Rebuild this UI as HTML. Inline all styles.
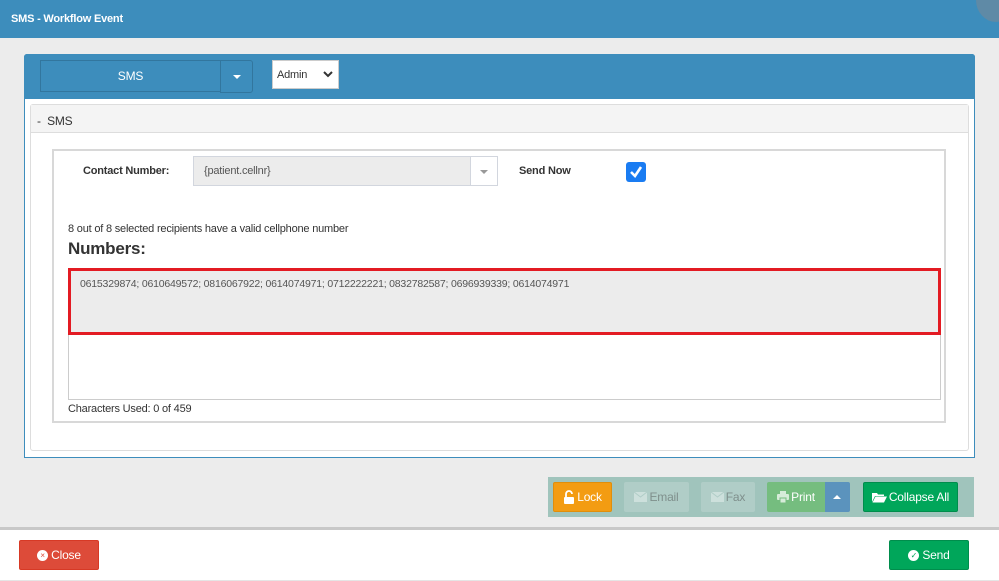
<!DOCTYPE html><html><head><style>
*{box-sizing:border-box;margin:0;padding:0}
body{width:999px;height:581px;position:relative;overflow:hidden;background:#ececec;font-family:"Liberation Sans",sans-serif;font-size:11px;color:#333;letter-spacing:-0.2px}
.a{position:absolute}
.btn{position:absolute;color:#fff;font-size:12px;display:flex;align-items:center;justify-content:center;border-radius:2px}
.btn svg{margin-right:2px}
</style></head><body>
<div class="a" style="left:0;top:0;width:999px;height:38px;background:#3d8dbc"></div>
<div class="a" style="left:976px;top:-22px;width:40px;height:44px;border-radius:50%;background:#5f8aa6"></div>
<div class="a" style="left:11px;top:13px;color:#fff;font-weight:bold;font-size:11px">SMS - Workflow Event</div>

<div class="a" style="left:24px;top:54px;width:951px;height:404px;border:1px solid #3d8dbc;background:#fff;border-radius:3px 3px 0 0"></div>
<div class="a" style="left:24px;top:54px;width:951px;height:45px;background:#3d8dbc;border-radius:3px 3px 0 0"></div>
<div class="a" style="left:40px;top:60px;width:181px;height:32px;border:1px solid #32769e;color:#fff;font-size:12px;display:flex;align-items:center;justify-content:center">SMS</div>
<div class="a" style="left:220px;top:60px;width:33px;height:33px;border:1px solid #32769e;border-radius:0 3px 3px 0"></div>
<div class="a" style="left:233px;top:75px;border-left:4px solid transparent;border-right:4px solid transparent;border-top:4px solid #fff"></div>
<div class="a" style="left:272px;top:60px;width:67px;height:29px;background:#fff;border:1px solid #ccc;padding:8px 4px;font-size:11px">Admin</div>
<svg class="a" style="left:323px;top:70px" width="10" height="8"><path d="M1 2 L5 6 L9 2" stroke="#333" stroke-width="2" fill="none"/></svg>

<div class="a" style="left:30px;top:104px;width:939px;height:347px;border:1px solid #ddd;border-radius:3px;background:#fff"></div>
<div class="a" style="left:31px;top:105px;width:937px;height:28px;background:#f4f4f4;border-bottom:1px solid #ddd"></div>
<div class="a" style="left:37px;top:114px;font-size:12px">-&nbsp; SMS</div>

<div class="a" style="left:52px;top:149px;width:894px;height:274px;border:2px solid #d8d8d8"></div>
<div class="a" style="left:83px;top:165px;font-weight:bold">Contact Number:</div>
<div class="a" style="left:193px;top:156px;width:305px;height:30px;border:1px solid #d2d6de;background:#ececec;padding:8px 10px;font-size:11px;color:#555">{patient.cellnr}</div>
<div class="a" style="left:470px;top:157px;width:27px;height:28px;background:#fff;border-left:1px solid #d2d6de"></div>
<div class="a" style="left:480px;top:170px;border-left:4px solid transparent;border-right:4px solid transparent;border-top:4px solid #999"></div>
<div class="a" style="left:519px;top:165px;font-weight:bold">Send Now</div>
<div class="a" style="left:626px;top:162px;width:20px;height:20px;background:#1a7cf2;border-radius:3px"></div>
<svg class="a" style="left:626px;top:162px" width="20" height="20"><path d="M5 10 L9 14 L15 5" stroke="#fff" stroke-width="2.6" fill="none"/></svg>

<div class="a" style="left:68px;top:223px">8 out of 8 selected recipients have a valid cellphone number</div>
<div class="a" style="left:68px;top:239px;font-weight:bold;font-size:17px">Numbers:</div>
<div class="a" style="left:68px;top:268px;width:873px;height:132px;border:1px solid #ccc;background:#fff"></div>
<div class="a" style="left:68px;top:268px;width:873px;height:67px;border:3px solid #e31b23;background:#ececec;padding:7px 9px;font-size:10.5px;color:#555">0615329874; 0610649572; 0816067922; 0614074971; 0712222221; 0832782587; 0696939339; 0614074971</div>
<div class="a" style="left:68px;top:403px">Characters Used: 0 of 459</div>

<div class="a" style="left:548px;top:477px;width:426px;height:40px;background:#a0c4bc"></div>
<div class="btn" style="left:553px;top:482px;width:59px;height:30px;background:#f39c12;border:1px solid #e08e0b"><svg width="12" height="14"><path d="M3 7 V4 a3 3 0 0 1 6 0" stroke="#fff" stroke-width="1.8" fill="none"/><rect x="1" y="7" width="10" height="7" rx="1" fill="#fff"/></svg>Lock</div>
<div class="btn" style="left:624px;top:482px;width:65px;height:30px;background:#b0cdc7;color:#7f8f8c"><svg width="13" height="10"><rect x="0" y="0" width="13" height="10" fill="#cde0dc"/><path d="M0 0 L6.5 5 L13 0" stroke="#b0cdc7" fill="none"/></svg>Email</div>
<div class="btn" style="left:701px;top:482px;width:54px;height:30px;background:#b0cdc7;color:#7f8f8c"><svg width="13" height="10"><rect x="0" y="0" width="13" height="10" fill="#cde0dc"/><path d="M0 0 L6.5 5 L13 0" stroke="#b0cdc7" fill="none"/></svg>Fax</div>
<div class="btn" style="left:767px;top:482px;width:58px;height:30px;background:#75bd7f;border-radius:2px 0 0 2px"><svg width="12" height="12"><rect x="3" y="0" width="6" height="3" fill="#d6ecd9"/><rect x="0" y="3" width="12" height="6" rx="1" fill="#d6ecd9"/><rect x="3" y="7" width="6" height="5" fill="#d6ecd9" stroke="#75bd7f"/></svg>Print</div>
<div class="btn" style="left:825px;top:482px;width:25px;height:30px;background:#5b93bd;border-radius:0 2px 2px 0"></div>
<div class="a" style="left:833px;top:495px;border-left:4px solid transparent;border-right:4px solid transparent;border-bottom:4px solid #fff"></div>
<div class="btn" style="left:863px;top:482px;width:95px;height:30px;background:#00a65a;border:1px solid #008d4c"><svg width="15" height="11"><path d="M0 1 H5 L6 2.5 H12 V4 H3 L0 10 Z" fill="#fff"/><path d="M3.5 4.5 H15 L12 10.5 H0.5 Z" fill="#fff"/></svg>Collapse All</div>

<div class="a" style="left:0;top:527px;width:999px;height:3px;background:#c8c8c8"></div>
<div class="a" style="left:0;top:530px;width:999px;height:51px;background:#fff;border-bottom:1px solid #e5e5e5"></div>
<div class="btn" style="left:19px;top:540px;width:80px;height:30px;background:#dd4b39;border:1px solid #d73925"><span style="display:inline-block;width:11px;height:11px;border-radius:50%;background:#fff;color:#dd4b39;font-size:8px;line-height:11px;text-align:center;margin-right:3px">×</span>Close</div>
<div class="btn" style="left:889px;top:540px;width:80px;height:30px;background:#00a65a;border:1px solid #008d4c"><span style="display:inline-block;width:11px;height:11px;border-radius:50%;background:#fff;color:#00a65a;font-size:8px;line-height:11px;text-align:center;margin-right:3px">✓</span>Send</div>
</body></html>
